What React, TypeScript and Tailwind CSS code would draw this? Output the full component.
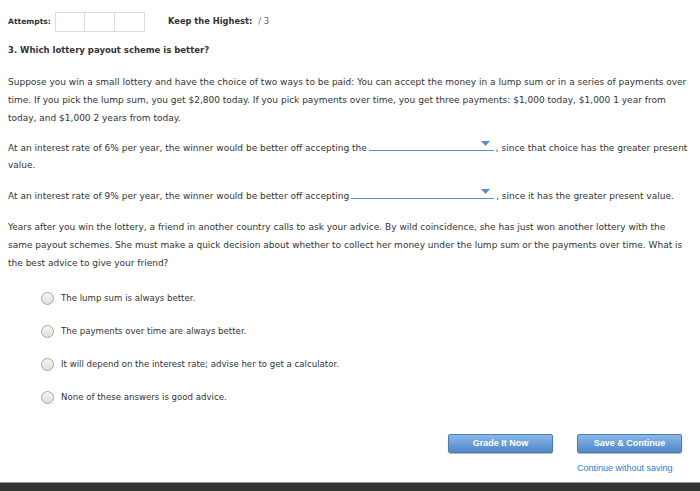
import React from "react"

const Dropdown = ({ width }: { width: string }) => (
  <span className={`inline-block relative align-baseline ${width} h-[10px] border-b border-[#5b93cc] mx-[2px]`}>
    <svg className="absolute right-[4px] top-[0px]" width="9" height="5" viewBox="0 0 9 5">
      <polygon points="0,0 9,0 4.5,5" fill="#4f8fd0" />
    </svg>
  </span>
)

const Radio = ({ label }: { label: string }) => (
  <label className="flex items-center gap-[7px]">
    <span className="w-[13px] h-[13px] rounded-full border border-[#a5a5a5] bg-gradient-to-b from-[#f6f6f6] to-[#dedede]" />
    <span>{label}</span>
  </label>
)

export default function App() {
  const options = [
    "The lump sum is always better.",
    "The payments over time are always better.",
    "It will depend on the interest rate; advise her to get a calculator.",
    "None of these answers is good advice.",
  ]

  return (
    <div className="w-[700px] h-[491px] bg-white flex flex-col text-[#333] font-['DejaVu_Sans',Verdana,sans-serif] text-[9px]">
      <div className="flex-1 pl-2 pr-[4px]">
        <div className="flex items-center h-[21px] mt-[11px] text-[8.5px]">
          <span className="font-bold w-[47px] text-[7.6px]">Attempts:</span>
          <div className="flex">
            <span className="w-[30px] h-[20px] border border-[#dcdcdc]" />
            <span className="w-[30px] h-[20px] border border-l-0 border-[#dcdcdc]" />
            <span className="w-[30px] h-[20px] border border-l-0 border-[#dcdcdc]" />
          </div>
          <span className="font-bold ml-[23px] text-[8.3px]">Keep the Highest:</span>
          <span className="ml-[6px] text-[#666]">/ 3</span>
        </div>

        <div className="font-bold text-[8.5px] mt-[11px] leading-[14px]">3. Which lottery payout scheme is better?</div>

        <p className="mt-[16px] leading-[18px]">
          Suppose you win a small lottery and have the choice of two ways to be paid: You can accept the money in a lump sum or in a series of payments over time. If you pick the lump sum, you get $2,800 today. If you pick payments over time, you get three payments: $1,000 today, $1,000 1 year from today, and $1,000 2 years from today.
        </p>

        <p className="mt-[13px] leading-[17px]">
          At an interest rate of 6% per year, the winner would be better off accepting the
          <Dropdown width="w-[125px]" />
          , since that choice has the greater present value.
        </p>

        <p className="mt-[14px] leading-[17px]">
          At an interest rate of 9% per year, the winner would be better off accepting
          <Dropdown width="w-[143px]" />
          , since it has the greater present value.
        </p>

        <p className="mt-[13px] leading-[18px] pr-[4px]">
          Years after you win the lottery, a friend in another country calls to ask your advice. By wild coincidence, she has just won another lottery with the same payout schemes. She must make a quick decision about whether to collect her money under the lump sum or the payments over time. What is the best advice to give your friend?
        </p>

        <div className="mt-[20px] ml-[33px] flex flex-col gap-[20px] text-[8.6px]">
          {options.map((o) => (
            <Radio key={o} label={o} />
          ))}
        </div>

        <div className="flex justify-end gap-[24px] mt-[30px] pr-[14px] font-['Liberation_Sans',Arial,sans-serif]">
          <button className="w-[105px] h-[19px] rounded-[2px] border border-[#4a7cb8] bg-gradient-to-b from-[#8ab8e8] to-[#4e87c9] text-white font-bold text-[9px] shadow-[0_1px_1px_rgba(0,0,0,0.3)]">
            Grade It Now
          </button>
          <div className="flex flex-col items-start">
            <button className="w-[105px] h-[19px] rounded-[2px] border border-[#4a7cb8] bg-gradient-to-b from-[#8ab8e8] to-[#4e87c9] text-white font-bold text-[9px] shadow-[0_1px_1px_rgba(0,0,0,0.3)]">
              Save &amp; Continue
            </button>
            <span className="mt-[9px] text-[#2f80c8] text-[9px]">Continue without saving</span>
          </div>
        </div>
      </div>
      <div className="h-[9px] bg-[#333] border-t border-[#9a9a9a]" />
    </div>
  )
}
